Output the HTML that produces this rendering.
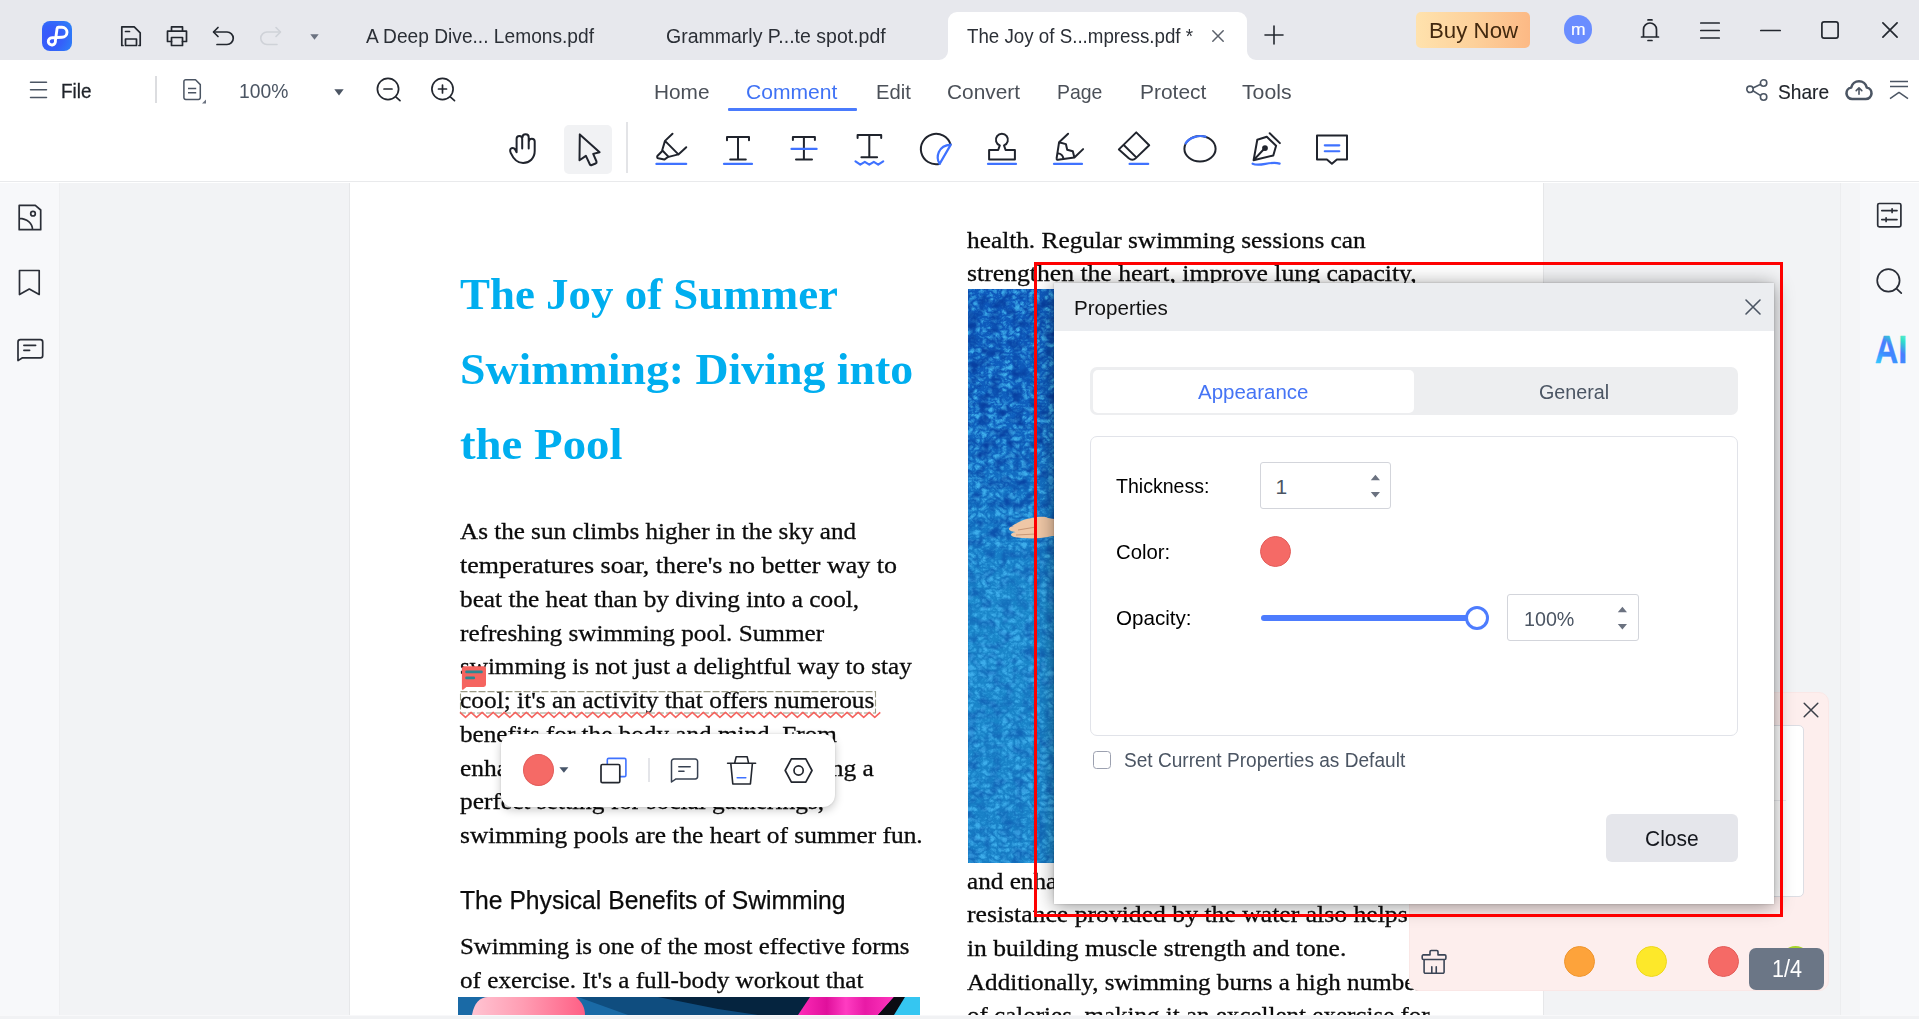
<!DOCTYPE html>
<html><head><meta charset="utf-8"><title>PDF Editor</title>
<style>
*{box-sizing:border-box;margin:0;padding:0}
html,body{width:1919px;height:1019px;overflow:hidden;background:#f2f3f5;font-family:"Liberation Sans","DejaVu Sans",sans-serif;color:#1f2329}
.a{position:absolute}
.t{position:absolute;white-space:nowrap;line-height:1;transform-origin:0 0}
svg{position:absolute;overflow:visible}
.ic{fill:none;stroke:#23272f;stroke-width:1.7;stroke-linecap:round;stroke-linejoin:round}
.bl{fill:none;stroke:#3f72ff;stroke-width:2;stroke-linecap:round}
#titlebar{left:0;top:0;width:1919px;height:60px;background:#e7e8ed}
#menubar{left:0;top:60px;width:1919px;height:121px;background:#fff}
#tbline{left:0;top:181px;width:1919px;height:1px;background:#e9eaec}
#tbgap{left:0;top:182px;width:1919px;height:1px;background:#fff}
#lside{left:0;top:183px;width:60px;height:836px;background:#f7f8fa;border-right:1px solid #eeeff1}
#rside{left:1860px;top:183px;width:59px;height:836px;background:#f7f8fa}
#rscroll{left:1840px;top:183px;width:20px;height:836px;background:#f4f5f7;border-left:1px solid #ecedef}
#page{left:349px;top:183px;width:1195px;height:836px;background:#fff;border-left:1px solid #e6e7e9;border-right:1px solid #e6e7e9}
#bottombar{left:0;top:1015px;width:1919px;height:4px;background:#f1f2f4;border-top:1px solid #f8f8fa}
.tk{fill:none;stroke:#20242d;stroke-width:2;stroke-linecap:round;stroke-linejoin:round}.tb{fill:none;stroke:#3f72ff;stroke-width:2.2;stroke-linecap:round;stroke-linejoin:round}
.sk{fill:none;stroke:#2a2e37;stroke-width:1.7;stroke-linecap:round;stroke-linejoin:round}
</style></head><body>
<div class="a" id="titlebar"></div>
<div class="a" id="menubar"></div>
<div class="a" id="tbline"></div>
<div class="a" id="tbgap"></div>
<div class="a" id="lside"></div>
<div class="a" id="page"></div>
<div class="a" id="rscroll"></div>
<div class="a" id="rside"></div>
<!-- logo -->
<div class="a" style="left:42px;top:21px;width:30px;height:30px;border-radius:8px;background:radial-gradient(circle at 30% 55%,#3b55fb 0%,#3560fa 45%,#2d7df8 85%,#3a93f8 100%)"></div>
<svg style="left:42px;top:21px" width="30" height="30" viewBox="0 0 30 30"><path d="M9.9 16.8 L20 16.3 A5 5 0 0 0 20 6.3 L16.4 6.3 Q15.3 6.3 15.1 7.4 L13.4 19.6 A3.6 3.6 0 1 1 9.9 16.8" fill="none" stroke="#fff" stroke-width="2.9" stroke-linecap="round" stroke-linejoin="round"/></svg>
<!-- save -->
<svg style="left:120px;top:25px" width="22" height="22" viewBox="0 0 22 22"><path class="ic" d="M3 20.5 H1.8 V1.8 H14.2 L20.2 7.8 V20.5 H19"/><path class="ic" d="M5.5 20.5 V14 H16.5 V20.5 Z"/><path class="ic" d="M5.5 6.5 H9.5"/></svg>
<!-- print -->
<svg style="left:166px;top:25px" width="22" height="22" viewBox="0 0 22 22"><path class="ic" d="M5.5 6 V1.8 H16.5 V6"/><path class="ic" d="M5.5 16.5 H1.5 V6.2 H20.5 V16.5 H16.5"/><path class="ic" d="M5.5 12.5 H16.5 V20.5 H5.5 Z"/></svg>
<!-- undo -->
<svg style="left:212px;top:26px" width="23" height="20" viewBox="0 0 23 20"><path class="ic" d="M6 1.5 L1.5 6 L6 10.5"/><path class="ic" d="M2 6 H15 a6 6 0 0 1 0 12.5 H5"/></svg>
<!-- redo (disabled) -->
<svg style="left:259px;top:26px" width="23" height="20" viewBox="0 0 23 20"><g stroke="#cfd2d8" fill="none" stroke-width="1.6" stroke-linecap="round" stroke-linejoin="round"><path d="M17 1.5 L21.5 6 L17 10.5"/><path d="M21 6 H8 a6 6 0 0 0 0 12.5 H18"/></g></svg>
<!-- dropdown -->
<svg style="left:310px;top:34px" width="9" height="6" viewBox="0 0 9 6"><path d="M0.3 0.3 H8.7 L4.5 5.7 Z" fill="#6b7280"/></svg>
<span class="t" style="left:366px;top:26.3px;font-size:20.5px;transform:scaleX(0.9350);color:#2b2f36">A Deep Dive... Lemons.pdf</span>
<span class="t" style="left:666px;top:26.3px;font-size:20.5px;transform:scaleX(0.9515);color:#2b2f36">Grammarly P...te spot.pdf</span>
<!-- active tab -->
<div class="a" style="left:948px;top:12px;width:299px;height:48px;background:#fff;border-radius:9px 9px 0 0"></div>
<svg style="left:939px;top:51px" width="9" height="9" viewBox="0 0 9 9"><path d="M9 0 V9 H0 A9 9 0 0 0 9 0 Z" fill="#fff"/></svg>
<svg style="left:1247px;top:51px" width="9" height="9" viewBox="0 0 9 9"><path d="M0 0 V9 H9 A9 9 0 0 1 0 0 Z" fill="#fff"/></svg>
<span class="t" style="left:966.7px;top:26.3px;font-size:20.5px;transform:scaleX(0.9141);color:#2b2f36">The Joy of S...mpress.pdf *</span>
<svg style="left:1211px;top:29px" width="14" height="14" viewBox="0 0 14 14"><path d="M1.8 1.8 L12.2 12.2 M12.2 1.8 L1.8 12.2" stroke="#5b616b" stroke-width="1.5" fill="none" stroke-linecap="round"/></svg>
<svg style="left:1264px;top:25px" width="20" height="20" viewBox="0 0 20 20"><path d="M10 1 V19 M1 10 H19" stroke="#23272f" stroke-width="1.6" fill="none" stroke-linecap="round"/></svg>
<!-- buy now -->
<div class="a" style="left:1416px;top:12px;width:114px;height:36px;border-radius:5px;background:linear-gradient(90deg,#ffe2ad 0%,#fdd19b 50%,#fcb985 100%)"></div>
<span class="t" style="left:1428.7px;top:19.6px;font-size:21.8px;transform:scaleX(1.0214);color:#43290f">Buy Now</span>
<!-- avatar -->
<div class="a" style="left:1563.6px;top:15.3px;width:28.6px;height:28.6px;border-radius:50%;background:#6a8dff"></div>
<span class="t" style="left:1570.8px;top:21.0px;font-size:17px;transform:scaleX(1.0302);color:#fff;-webkit-text-stroke:0.15px #fff">m</span>
<!-- bell -->
<svg style="left:1640px;top:19px" width="20" height="23" viewBox="0 0 20 23"><path class="ic" d="M1.5 18 H18.5 M3.5 18 V10.5 a6.5 6.5 0 0 1 13 0 V18 M8 0.9 H12 M8 21.5 H12"/></svg>
<!-- hamburger -->
<svg style="left:1700px;top:22px" width="20" height="17" viewBox="0 0 20 17"><path class="ic" d="M0.8 1 H19.2 M0.8 8.5 H19.2 M0.8 16 H19.2"/></svg>
<!-- min -->
<svg style="left:1760px;top:29px" width="21" height="3" viewBox="0 0 21 3"><path class="ic" d="M0.8 1.5 H20.2"/></svg>
<!-- max -->
<svg style="left:1821px;top:21px" width="18" height="18" viewBox="0 0 18 18"><rect class="ic" x="0.9" y="0.9" width="16.2" height="16.2" rx="2.2"/></svg>
<!-- close -->
<svg style="left:1882px;top:22px" width="16" height="16" viewBox="0 0 16 16"><path class="ic" d="M0.9 0.9 L15.1 15.1 M15.1 0.9 L0.9 15.1"/></svg>

<!-- file hamburger -->
<svg style="left:30px;top:81px" width="17" height="18" viewBox="0 0 17 18"><path d="M0.5 1.2 H16.5 M0.5 8.8 H16.5 M0.5 16.6 H16.5" stroke="#4b5563" stroke-width="1.5" fill="none" stroke-linecap="round"/></svg>
<span class="t" style="left:61px;top:81.0px;font-size:20.5px;transform:scaleX(0.9229);color:#1f2329;-webkit-text-stroke:0.3px #1f2329">File</span>
<div class="a" style="left:155px;top:76px;width:2px;height:27px;background:#dcdde0"></div>
<!-- page icon -->
<svg style="left:183px;top:79px" width="24" height="26" viewBox="0 0 24 26"><path d="M0.9 2.6 a1.8 1.8 0 0 1 1.8-1.8 H12.5 L17.3 5.6 V18.6 a1.8 1.8 0 0 1-1.8 1.8 H2.7 a1.8 1.8 0 0 1-1.8-1.8 Z" fill="none" stroke="#4b5563" stroke-width="1.5" stroke-linejoin="round"/><path d="M5 9.5 H13.2 M5 13.8 H13.2" stroke="#4b5563" stroke-width="1.5" fill="none"/><path d="M23 20.5 V24.5 H19 Z" fill="#6b7280"/></svg>
<span class="t" style="left:238.7px;top:80.0px;font-size:21px;transform:scaleX(0.9177);color:#4b5563">100%</span>
<svg style="left:334px;top:89px" width="10" height="7" viewBox="0 0 10 7"><path d="M0.3 0.3 H9.7 L5 6.5 Z" fill="#4b5563"/></svg>
<!-- zoom out -->
<svg style="left:376px;top:77px" width="26" height="26" viewBox="0 0 26 26"><g stroke="#23272f" stroke-width="1.7" fill="none" stroke-linecap="round"><circle cx="12" cy="12" r="10.6"/><path d="M19.8 19.8 L24 23.6 M8 12 H16"/></g></svg>
<!-- zoom in -->
<svg style="left:430px;top:77px" width="26" height="26" viewBox="0 0 26 26"><g stroke="#23272f" stroke-width="1.7" fill="none" stroke-linecap="round"><circle cx="12.5" cy="12" r="10.6"/><path d="M20.3 19.8 L24.5 23.6 M8.5 12 H16.5 M12.5 8 V16"/></g></svg>
<!-- menu tabs -->
<span class="t" style="left:653.5px;top:81.0px;font-size:21px;transform:scaleX(0.9905);color:#4b5058">Home</span>
<span class="t" style="left:746.3px;top:81.0px;font-size:21px;transform:scaleX(1.0041);color:#3f72f5">Comment</span>
<div class="a" style="left:728px;top:108px;width:129px;height:3px;background:#4a7bfd;border-radius:1px"></div>
<span class="t" style="left:875.6px;top:81.0px;font-size:21px;transform:scaleX(0.9617);color:#4b5058">Edit</span>
<span class="t" style="left:946.9px;top:81.0px;font-size:21px;transform:scaleX(0.9928);color:#4b5058">Convert</span>
<span class="t" style="left:1057px;top:81.0px;font-size:21px;transform:scaleX(0.9256);color:#4b5058">Page</span>
<span class="t" style="left:1139.6px;top:81.0px;font-size:21px;transform:scaleX(0.9965);color:#4b5058">Protect</span>
<span class="t" style="left:1242.4px;top:81.0px;font-size:21px;transform:scaleX(1.0116);color:#4b5058">Tools</span>
<!-- share -->
<svg style="left:1745px;top:78px" width="24" height="24" viewBox="0 0 24 24"><g stroke="#4b5563" stroke-width="1.6" fill="none"><circle cx="18.6" cy="5" r="3.2"/><circle cx="5" cy="11.3" r="3.2"/><circle cx="18.6" cy="19" r="3.2"/><path d="M7.9 9.9 L15.7 6.3 M7.9 12.8 L15.7 17.6"/></g></svg>
<span class="t" style="left:1778.3px;top:80.6px;font-size:21px;transform:scaleX(0.9117);color:#1f2329;-webkit-text-stroke:0.15px #1f2329">Share</span>
<!-- cloud -->
<svg style="left:1845px;top:79px" width="28" height="22" viewBox="0 0 28 22"><path d="M7.2 20 a5.8 5.8 0 0 1-1-11.5 a8 8 0 0 1 15.6 0 a5.8 5.8 0 0 1-1 11.5 Z" fill="none" stroke="#4b5563" stroke-width="2.6" stroke-linejoin="round"/><path d="M14 15.2 V9 M11.2 11.6 L14 8.8 L16.8 11.6" fill="none" stroke="#4b5563" stroke-width="1.6" stroke-linecap="round" stroke-linejoin="round"/></svg>
<!-- collapse -->
<svg style="left:1889px;top:80px" width="20" height="20" viewBox="0 0 20 20"><path d="M1 1.6 H19 M1 6.4 H19 M1 18.6 L10 12.4 L19 18.6" fill="none" stroke="#4b5563" stroke-width="1.5" stroke-linejoin="round"/></svg>

<div class="a" style="left:564px;top:125px;width:48px;height:49px;border-radius:5px;background:#f1f2f4"></div>
<div class="a" style="left:626px;top:122px;width:2px;height:51px;background:#e3e4e7"></div>
<!-- hand -->
<svg style="left:500px;top:125px" width="60" height="50" viewBox="0 0 60 50"><path class="tk" d="M16.6 27.3 V13.8 a2.8 2.8 0 0 1 5.6 0 V23.6 M22.5 12.3 a3.1 3.1 0 0 1 6.2 0 V23.6 M28.9 16.6 a2.9 2.9 0 0 1 5.8 0 V26 c0 7.2-5.2 12-11.6 12 c-5.8 0-9.4-3.6-12.4-10.2 c-1-2.2-0.7-3.9 0.9-4.6 c1.5-0.6 2.8 0.2 3.6 1.4 L16.6 27.3"/></svg>
<!-- cursor -->
<svg style="left:564px;top:125px" width="48" height="49" viewBox="0 0 48 49"><path class="tk" d="M15.8 9.4 L15.5 35.3 L21.9 30.9 L25.8 39.2 a1.6 1.6 0 0 0 2 0.8 l3.8-1.5 a1.6 1.6 0 0 0 0.9-2 L29.2 28.9 L35.6 27.3 Z"/></svg>
<!-- highlighter -->
<svg style="left:645px;top:125px" width="60" height="50" viewBox="0 0 60 50"><path class="tk" d="M27.5 8.75 L20 15.9 L33.4 29.4 L41.25 22.2 M20 15.9 L17.2 25.2 L23.6 31.9 L33.4 29.4 M17 26.3 L12.6 30.8 a1.5 1.5 0 0 0 0.6 2.5 L19.3 34.6 L23 32"/><path class="tb" d="M11.4 38.9 H41.2"/></svg>
<!-- underline T -->
<svg style="left:645px;top:125px" width="120" height="50" viewBox="0 0 120 50"><path class="tk" d="M82 15.2 V11.9 H104 V15.2 M93 11.9 V34.4 M85.2 34.4 H100.8"/><path class="tb" d="M79 38.9 H107"/></svg>
<!-- strike T -->
<svg style="left:780px;top:125px" width="60" height="50" viewBox="0 0 60 50"><path class="tk" d="M12.9 15 V11.9 H34.9 V15 M23.9 11.9 V34.4 M16 34.4 H32"/><path class="tb" d="M11.5 23.9 H36.6"/></svg>
<!-- squiggle T -->
<svg style="left:780px;top:125px" width="120" height="50" viewBox="0 0 120 50"><path class="tk" d="M77.6 13 V9.9 H101.2 V13 M89.3 9.9 V32.2 M81.4 32.2 H97.1"/><path class="tb" d="M75.5 36.4 L80.3 39.6 L84.8 36.9 L89.3 39.6 L93.8 36.9 L98.2 39.6 L103.2 36.4" stroke-width="2"/></svg>
<!-- sticker -->
<svg style="left:910px;top:125px" width="60" height="50" viewBox="0 0 60 50"><path class="tk" d="M40.6 19.6 A15.2 15.2 0 1 0 29.4 38.9"/><path class="tb" d="M40.8 19.6 L29.6 38.9 C25.5 32 28 20.5 40.8 19.6 Z" stroke-linejoin="miter"/></svg>
<!-- stamp -->
<svg style="left:910px;top:125px" width="120" height="50" viewBox="0 0 120 50"><path class="tk" d="M88.2 25 H79.1 V34.6 H104.9 V25 H95.6 L94 20.4 A6 6 0 1 0 89.8 20.4 Z"/><path class="tb" d="M78 38.9 H106"/></svg>
<!-- pencil -->
<svg style="left:1040px;top:125px" width="60" height="50" viewBox="0 0 60 50"><path class="tk" d="M28.1 8.75 L19.1 17.2 L25.9 19.1 L27.2 24.7 L32.8 26.25 L34.4 32.5 L43.1 24.1 M19.1 17.2 L16.6 33.4 a1.2 1.2 0 0 0 1.4 1.4 L34.4 32.5 M18.4 28.4 C21 29 23 31 23.4 33.6"/><path class="tb" d="M14 38.9 H42"/></svg>
<!-- eraser -->
<svg style="left:1040px;top:125px" width="120" height="50" viewBox="0 0 120 50"><path class="tk" d="M96.25 7.4 L109.2 20.3 L95.6 33.4 a4.6 4.6 0 0 1-6.6 0 L78.9 24.4 Z M83.75 20 L95.8 31.9"/><path class="tb" d="M89.6 38.9 H108.2"/></svg>
<!-- ellipse -->
<svg style="left:1170px;top:125px" width="60" height="50" viewBox="0 0 60 50"><ellipse class="tk" cx="30" cy="23.75" rx="15.6" ry="12.8"/><path class="tb" d="M15.6 18.4 C18.5 13.5 27.5 9.5 35.5 11.6" stroke-linecap="butt" stroke-width="2"/></svg>
<!-- pen -->
<svg style="left:1170px;top:125px" width="120" height="50" viewBox="0 0 120 50"><path class="tk" d="M83.6 35.2 L87.3 14.8 L96.8 11.8 L106.1 20.7 L103.3 30.5 Z M99.7 8.2 L109.9 18.1 M83.9 34.9 L94 24"/><circle cx="95" cy="23.1" r="2.9" fill="#20242d"/><path class="tb" d="M82.6 38.7 C90 42.5 100 35.5 109.6 38.6"/></svg>
<!-- note -->
<svg style="left:1300px;top:125px" width="60" height="50" viewBox="0 0 60 50"><path class="tk" d="M17 10.4 H47 V34.4 H36.9 L31.9 38.7 L26.9 34.4 H17 Z"/><path class="tb" d="M24.8 20.3 H39.3 M24.8 26.25 H39.3"/></svg>

<!-- left: thumbnails -->
<svg style="left:0;top:190px" width="60" height="190" viewBox="0 0 60 190"><path class="sk" d="M19.2 15.4 H35.3 L40.7 20 V39.7 H19.2 Z M19.2 28.3 C27 28.6 32.3 33 32.6 39.7"/><circle class="sk" cx="33" cy="23.7" r="2.3"/>
<path class="sk" d="M19.5 80.5 H39.2 V104.5 L29.3 99 L19.5 104.5 Z"/>
<path class="sk" d="M20.5 149.6 H40.3 a2.4 2.4 0 0 1 2.4 2.4 V165.4 a2.4 2.4 0 0 1-2.4 2.4 H22.5 L18 170.6 V152 a2.4 2.4 0 0 1 2.4-2.4 Z M23.9 155.3 H35.6 M23.9 160.3 H29.6"/></svg>
<!-- right -->
<svg style="left:1860px;top:190px" width="59" height="190" viewBox="0 0 59 190"><rect class="sk" x="17.7" y="13.5" width="23.2" height="23.4" rx="1.6"/><path class="sk" d="M21.8 20.6 H37 M21.8 29.6 H37 M32.1 18.8 V22.4 M26.1 27.8 V31.4" stroke-width="1.4"/>
<circle class="sk" cx="28.4" cy="90.4" r="11.2"/><path class="sk" d="M36.5 98.6 L41.3 103.2"/>
<defs><linearGradient id="aig" gradientUnits="userSpaceOnUse" x1="16" y1="174" x2="36" y2="142"><stop offset="0" stop-color="#35d2ff"/><stop offset="0.35" stop-color="#3d8cff"/><stop offset="0.6" stop-color="#4a7dff"/><stop offset="0.9" stop-color="#2fe0c8"/><stop offset="1" stop-color="#50e8cb"/></linearGradient></defs>
<text x="14.8" y="172.9" font-family="Liberation Sans, DejaVu Sans, sans-serif" font-weight="bold" font-size="39" textLength="32.6" lengthAdjust="spacingAndGlyphs" fill="url(#aig)" stroke="url(#aig)" stroke-width="0.3" stroke-linejoin="round">AI</text></svg>

<!-- title -->
<span class="t" style="left:460px;top:272.8px;font-size:44px;font-family:'Liberation Serif','DejaVu Serif',serif;transform:scaleX(1.0208);color:#00aeef;font-weight:bold">The Joy of Summer</span>
<span class="t" style="left:460px;top:347.8px;font-size:44px;font-family:'Liberation Serif','DejaVu Serif',serif;transform:scaleX(1.0415);color:#00aeef;font-weight:bold">Swimming: Diving into</span>
<span class="t" style="left:460px;top:422.8px;font-size:44px;font-family:'Liberation Serif','DejaVu Serif',serif;transform:scaleX(1.0637);color:#00aeef;font-weight:bold">the Pool</span>
<!-- left column paragraph -->
<span class="t" style="left:459.5px;top:519.4px;font-size:24px;font-family:'Liberation Serif','DejaVu Serif',serif;transform:scaleX(1.0459);color:#0b0b0b;-webkit-text-stroke:0.3px #0b0b0b">As the sun climbs higher in the sky and</span>
<span class="t" style="left:459.5px;top:553.2px;font-size:24px;font-family:'Liberation Serif','DejaVu Serif',serif;transform:scaleX(1.0818);color:#0b0b0b;-webkit-text-stroke:0.3px #0b0b0b">temperatures soar, there's no better way to</span>
<span class="t" style="left:459.5px;top:586.9px;font-size:24px;font-family:'Liberation Serif','DejaVu Serif',serif;transform:scaleX(1.0524);color:#0b0b0b;-webkit-text-stroke:0.3px #0b0b0b">beat the heat than by diving into a cool,</span>
<span class="t" style="left:459.5px;top:620.7px;font-size:24px;font-family:'Liberation Serif','DejaVu Serif',serif;transform:scaleX(1.0504);color:#0b0b0b;-webkit-text-stroke:0.3px #0b0b0b">refreshing swimming pool. Summer</span>
<span class="t" style="left:459.5px;top:654.4px;font-size:24px;font-family:'Liberation Serif','DejaVu Serif',serif;transform:scaleX(1.0456);color:#0b0b0b;-webkit-text-stroke:0.3px #0b0b0b">swimming is not just a delightful way to stay</span>
<span class="t" style="left:460px;top:688.2px;font-size:24px;font-family:'Liberation Serif','DejaVu Serif',serif;transform:scaleX(1.0577);color:#0b0b0b;-webkit-text-stroke:0.3px #0b0b0b">cool; it's an activity that offers numerous</span>
<span class="t" style="left:459.5px;top:721.9px;font-size:24px;font-family:'Liberation Serif','DejaVu Serif',serif;transform:scaleX(1.0488);color:#0b0b0b;-webkit-text-stroke:0.3px #0b0b0b">benefits for the body and mind. From</span>
<span class="t" style="left:459.5px;top:755.7px;font-size:24px;font-family:'Liberation Serif','DejaVu Serif',serif;transform:scaleX(1.0615);color:#0b0b0b;-webkit-text-stroke:0.3px #0b0b0b">enhancing physical health to providing a</span>
<span class="t" style="left:459.5px;top:789.4px;font-size:24px;font-family:'Liberation Serif','DejaVu Serif',serif;transform:scaleX(1.0568);color:#0b0b0b;-webkit-text-stroke:0.3px #0b0b0b">perfect setting for social gatherings,</span>
<span class="t" style="left:459.5px;top:823.2px;font-size:24px;font-family:'Liberation Serif','DejaVu Serif',serif;transform:scaleX(1.0582);color:#0b0b0b;-webkit-text-stroke:0.3px #0b0b0b">swimming pools are the heart of summer fun.</span>
<span class="t" style="left:459.5px;top:887.0px;font-size:26.5px;transform:scaleX(0.9315);color:#0b0b0b;-webkit-text-stroke:0.25px #0b0b0b">The Physical Benefits of Swimming</span>
<span class="t" style="left:459.5px;top:934.3px;font-size:24px;font-family:'Liberation Serif','DejaVu Serif',serif;transform:scaleX(1.0369);color:#0b0b0b;-webkit-text-stroke:0.3px #0b0b0b">Swimming is one of the most effective forms</span>
<span class="t" style="left:459.5px;top:968.4px;font-size:24px;font-family:'Liberation Serif','DejaVu Serif',serif;transform:scaleX(1.0483);color:#0b0b0b;-webkit-text-stroke:0.3px #0b0b0b">of exercise. It's a full-body workout that</span>
<!-- bottom-left image strip -->
<svg style="left:458px;top:997px" width="462" height="18" viewBox="0 0 462 18">
<defs><linearGradient id="fl" x1="0" y1="0" x2="1" y2="0"><stop offset="0" stop-color="#ffc4d2"/><stop offset="0.45" stop-color="#ff9db3"/><stop offset="1" stop-color="#ff5f85"/></linearGradient>
<linearGradient id="mg" x1="0" y1="0" x2="1" y2="0"><stop offset="0" stop-color="#ff2bb8"/><stop offset="0.3" stop-color="#e0109c"/><stop offset="0.5" stop-color="#ff3cc2"/><stop offset="0.7" stop-color="#e81aa6"/><stop offset="1" stop-color="#ff35bd"/></linearGradient></defs>
<rect width="462" height="18" fill="#05243f"/>
<path d="M0 0 H180 L215 18 H0 Z" fill="#1a6aa6"/>
<path d="M120 0 H200 L260 12 L300 18 H170 Z" fill="#0f4d7f"/>
<path d="M14 18 C16 6 22 0 30 0 H118 C124 5 127 11 127 18 Z" fill="url(#fl)"/>
<path d="M352 0 H436 L420 18 H340 Z" fill="url(#mg)"/>
<path d="M436 0 H447 L436 18 H420 Z" fill="#0b0b12"/>
<path d="M447 0 H462 V18 H436 Z" fill="#35c6f1"/>
</svg>
<!-- right column -->
<span class="t" style="left:967.3px;top:227.9px;font-size:24px;font-family:'Liberation Serif','DejaVu Serif',serif;transform:scaleX(1.0549);color:#0b0b0b;-webkit-text-stroke:0.3px #0b0b0b">health. Regular swimming sessions can</span>
<span class="t" style="left:967.3px;top:261.2px;font-size:24px;font-family:'Liberation Serif','DejaVu Serif',serif;transform:scaleX(1.0700);color:#0b0b0b;-webkit-text-stroke:0.3px #0b0b0b">strengthen the heart, improve lung capacity,</span>
<svg style="left:968px;top:289px" width="90" height="574" viewBox="0 0 90 574">
<defs>
<linearGradient id="pw" x1="0" y1="0" x2="0" y2="1"><stop offset="0" stop-color="#0e58bb"/><stop offset="0.22" stop-color="#0f5fbd"/><stop offset="0.4" stop-color="#1475c4"/><stop offset="0.55" stop-color="#1a86c9"/><stop offset="0.8" stop-color="#1983c8"/><stop offset="1" stop-color="#187fc6"/></linearGradient>
<linearGradient id="dkm" x1="0" y1="0" x2="0" y2="1"><stop offset="0" stop-color="#fff"/><stop offset="0.3" stop-color="#fff"/><stop offset="0.5" stop-color="#777"/><stop offset="1" stop-color="#666"/></linearGradient>
<mask id="dkmask"><rect width="90" height="574" fill="url(#dkm)"/></mask>
<filter id="whl" x="0" y="0" width="100%" height="100%" color-interpolation-filters="sRGB"><feTurbulence type="turbulence" baseFrequency="0.15 0.17" numOctaves="3" seed="7"/><feColorMatrix type="matrix" values="0 0 0 0 0.24  0 0 0 0 0.68  0 0 0 0 0.92  2.3 0 0 0 -0.40"/></filter>
<filter id="wdk" x="0" y="0" width="100%" height="100%" color-interpolation-filters="sRGB"><feTurbulence type="fractalNoise" baseFrequency="0.09 0.10" numOctaves="2" seed="3"/><feColorMatrix type="matrix" values="0 0 0 0 0.03  0 0 0 0 0.25  0 0 0 0 0.63  0 2.6 0 0 -1.12"/></filter>
</defs>
<rect width="90" height="574" fill="url(#pw)"/>
<rect width="90" height="574" filter="url(#whl)"/>
<g mask="url(#dkmask)"><rect width="90" height="574" filter="url(#wdk)"/></g>
<path d="M44 237 c4-3 12-7 20-8 c6-1 12-2 16 0 l6 1 h6 v17 h-8 c-8 2-18 3-28 2 c-6 0-12-1-13-3 c0-2 3-3 6-3 c-4 0-8-1-8-3 c0-2 3-3 6-3 z" fill="#efc7a6"/>
<path d="M50 241 l18-3 M48 246 l20-1" stroke="#c99775" stroke-width="1" fill="none"/>
</svg>
<span class="t" style="left:967.3px;top:868.7px;font-size:24px;font-family:'Liberation Serif','DejaVu Serif',serif;transform:scaleX(1.0498);color:#0b0b0b;-webkit-text-stroke:0.3px #0b0b0b">and enhance</span>
<span class="t" style="left:967.3px;top:901.8px;font-size:24px;font-family:'Liberation Serif','DejaVu Serif',serif;transform:scaleX(1.0700);color:#0b0b0b;-webkit-text-stroke:0.3px #0b0b0b">resistance provided by the water also helps</span>
<span class="t" style="left:967.3px;top:936.0px;font-size:24px;font-family:'Liberation Serif','DejaVu Serif',serif;transform:scaleX(1.0656);color:#0b0b0b;-webkit-text-stroke:0.3px #0b0b0b">in building muscle strength and tone.</span>
<span class="t" style="left:967.3px;top:969.7px;font-size:24px;font-family:'Liberation Serif','DejaVu Serif',serif;transform:scaleX(1.0449);color:#0b0b0b;-webkit-text-stroke:0.3px #0b0b0b">Additionally, swimming burns a high number</span>
<span class="t" style="left:967.3px;top:1003.4px;font-size:24px;font-family:'Liberation Serif','DejaVu Serif',serif;transform:scaleX(1.0426);color:#0b0b0b;-webkit-text-stroke:0.3px #0b0b0b">of calories, making it an excellent exercise for</span>
<!-- annotation -->
<svg style="left:455px;top:660px" width="430" height="64" viewBox="0 0 430 64">
<path d="M6.9 8.6 a2.4 2.4 0 0 1 2.4-2.4 H28.6 a2.4 2.4 0 0 1 2.4 2.4 V24.5 a2.4 2.4 0 0 1-2.4 2.4 H11.4 L8.4 29.6 a0.9 0.9 0 0 1-1.5-0.7 Z" fill="#f5645f"/>
<path d="M11.5 11.9 H26.5 M11.5 17.9 H18.8" stroke="#2b8792" stroke-width="2.6" stroke-linecap="round" fill="none"/>
<rect x="5.5" y="31.6" width="415" height="21.4" fill="none" stroke="#9a9a86" stroke-width="1.1" stroke-dasharray="7 2"/>
<path d="M5 52.4 l5.53 5 l5.53-5 l5.53 5 l5.53-5 l5.53 5 l5.53-5 l5.53 5 l5.53-5 l5.53 5 l5.53-5 l5.53 5 l5.53-5 l5.53 5 l5.53-5 l5.53 5 l5.53-5 l5.53 5 l5.53-5 l5.53 5 l5.53-5 l5.53 5 l5.53-5 l5.53 5 l5.53-5 l5.53 5 l5.53-5 l5.53 5 l5.53-5 l5.53 5 l5.53-5 l5.53 5 l5.53-5 l5.53 5 l5.53-5 l5.53 5 l5.53-5 l5.53 5 l5.53-5 l5.53 5 l5.53-5 l5.53 5 l5.53-5 l5.53 5 l5.53-5 l5.53 5 l5.53-5 l5.53 5 l5.53-5 l5.53 5 l5.53-5 l5.53 5 l5.53-5 l5.53 5 l5.53-5 l5.53 5 l5.53-5 l5.53 5 l5.53-5 l5.53 5 l5.53-5 l5.53 5 l5.53-5 l5.53 5 l5.53-5 l5.53 5 l5.53-5 l5.53 5 l5.53-5 l5.53 5 l5.53-5 l5.53 5 l5.53-5 l5.53 5 l5.53-5 l5.53 5 l5.53-5" fill="none" stroke="#f5645f" stroke-width="1.5" stroke-linejoin="round"/>
</svg>

<div class="a" style="left:1409px;top:692px;width:420px;height:299px;border-radius:10px;background:#fdeeed;border:1px solid #fae7e6"></div>
<div class="a" style="left:1430px;top:725px;width:374px;height:172px;border-radius:5px;background:#fff;border:1px solid #dcdde3"></div>
<div class="a" style="left:1431px;top:800px;width:355px;height:1px;background:#ebecef"></div>
<svg style="left:1803px;top:702px" width="16" height="16" viewBox="0 0 16 16"><path d="M1.2 1.2 L14.8 14.8 M14.8 1.2 L1.2 14.8" stroke="#3a3f48" stroke-width="1.5" fill="none" stroke-linecap="round"/></svg>
<!-- trash -->
<svg style="left:1421px;top:949px" width="26" height="26" viewBox="0 0 26 26"><g fill="none" stroke="#3b4556" stroke-width="1.6" stroke-linejoin="round" stroke-linecap="round"><path d="M9 5.9 V2.7 a1.2 1.2 0 0 1 1.2-1.2 h5.6 a1.2 1.2 0 0 1 1.2 1.2 V5.9 H23.7 a1.2 1.2 0 0 1 1.2 1.2 V9.3 a1.2 1.2 0 0 1-1.2 1.2 H2.4 a1.2 1.2 0 0 1-1.2-1.2 V7.1 a1.2 1.2 0 0 1 1.2-1.2 Z M3.1 10.6 V22.9 a1.4 1.4 0 0 0 1.4 1.4 H21.7 a1.4 1.4 0 0 0 1.4-1.4 V10.6 M10.8 17.7 V24 M15.25 17.7 V24"/></g></svg>
<div class="a" style="left:1564px;top:946px;width:31px;height:31px;border-radius:50%;background:#fda33b;border:1px solid #ef9630"></div>
<div class="a" style="left:1636px;top:946px;width:31px;height:31px;border-radius:50%;background:#fde82a;border:1px solid #eed820"></div>
<div class="a" style="left:1708px;top:946px;width:31px;height:31px;border-radius:50%;background:#f56a66;border:1px solid #e35d5a"></div>
<div class="a" style="left:1780px;top:946px;width:31px;height:31px;border-radius:50%;background:#a6d52a"></div>
<div class="a" style="left:1749px;top:948px;width:75px;height:42px;border-radius:7px;background:#6b7686"></div>
<span class="t" style="left:1772px;top:958.3px;font-size:23px;transform:scaleX(0.9380);color:#fff">1/4</span>

<div class="a" style="left:501px;top:734px;width:334px;height:73px;border-radius:12px;background:#fff;box-shadow:0 3px 10px rgba(0,0,0,0.22),0 0 2px rgba(0,0,0,0.12)"></div>
<div class="a" style="left:523px;top:754px;width:31px;height:32px;border-radius:50%;background:#f56a66;border:1px solid #e35d5a"></div>
<svg style="left:559px;top:767px" width="10" height="6" viewBox="0 0 10 6"><path d="M0.4 0.2 H9.4 L4.9 5.8 Z" fill="#475569"/></svg>
<svg style="left:595px;top:750px" width="40" height="40" viewBox="0 0 40 40"><rect x="12.3" y="8.4" width="18.6" height="18.2" rx="1.4" fill="none" stroke="#3f72ff" stroke-width="1.6"/><rect x="6" y="14.5" width="18.8" height="18.2" rx="1.4" fill="#fff" stroke="#23272f" stroke-width="1.7"/></svg>
<div class="a" style="left:648px;top:758px;width:2px;height:24px;background:#e4e5e9"></div>
<svg style="left:660px;top:725px" width="180" height="90" viewBox="0 0 180 90"><g fill="none" stroke="#374151" stroke-width="1.5" stroke-linecap="round" stroke-linejoin="round">
<path d="M14 34 H35.2 a2.4 2.4 0 0 1 2.4 2.4 V51.5 a2.4 2.4 0 0 1-2.4 2.4 H16 L11.5 57 V36.4 a2.4 2.4 0 0 1 2.4-2.4 Z M18.8 41.7 H30.2 M18.8 46.2 H24"/>
<path d="M67.6 38.2 H95.6 M74.6 38.2 L76.2 31.8 H87.2 L88.6 38.2 M70.8 38.4 L72.8 59 H90.4 L92.4 38.4" stroke="#23272f" stroke-width="1.6"/>
<path d="M125.2 45.5 L131.4 33.9 H145.8 L152 45.5 L145.8 57.1 H131.4 Z" stroke="#23272f" stroke-width="1.7"/><circle cx="138.6" cy="45.5" r="4.6" stroke="#23272f" stroke-width="1.7"/>
<path d="M77.2 52.8 H85.8" stroke="#3f72ff" stroke-width="1.6"/></g></svg>

<div class="a" style="left:1054px;top:283px;width:720px;height:621px;background:#fff;box-shadow:0 2px 18px rgba(0,0,0,0.42),0 0 2px rgba(0,0,0,0.2)"></div>
<div class="a" style="left:1034px;top:262px;width:749px;height:655px;border:3px solid #fe0000"></div>
<div class="a" style="left:1054px;top:283px;width:720px;height:47.5px;background:#ebedf0"></div>
<span class="t" style="left:1074.2px;top:296.8px;font-size:21px;transform:scaleX(0.9800);color:#111">Properties</span>
<svg style="left:1745px;top:299px" width="16" height="16" viewBox="0 0 16 16"><path d="M1 1 L15 15 M15 1 L1 15" stroke="#4b5563" stroke-width="1.6" fill="none" stroke-linecap="round"/></svg>
<!-- tabs -->
<div class="a" style="left:1090px;top:367px;width:648px;height:48px;border-radius:7px;background:#edeef0"></div>
<div class="a" style="left:1092.5px;top:369.5px;width:321.5px;height:43px;border-radius:5px;background:#fff"></div>
<span class="t" style="left:1198.3px;top:381.8px;font-size:20.5px;transform:scaleX(0.9990);color:#4574f5">Appearance</span>
<span class="t" style="left:1539.2px;top:381.8px;font-size:20.5px;transform:scaleX(0.9625);color:#4b5563">General</span>
<!-- panel -->
<div class="a" style="left:1090px;top:436px;width:648px;height:300px;border-radius:7px;border:1px solid #e1e3e9;background:#fff"></div>
<span class="t" style="left:1115.8px;top:475.4px;font-size:21px;transform:scaleX(0.9315);color:#000">Thickness:</span>
<div class="a" style="left:1260px;top:462px;width:131px;height:47px;border-radius:3px;border:1px solid #d3d5db;background:#fff"></div>
<span class="t" style="left:1275.4px;top:476.2px;font-size:21px;color:#4b5563">1</span>
<svg style="left:1370px;top:474px" width="11" height="24" viewBox="0 0 11 24"><path d="M0.8 6.2 L5.4 0.8 L10 6.2 Z M0.8 18 L5.4 23.4 L10 18 Z" fill="#6b7280"/></svg>
<span class="t" style="left:1115.8px;top:541.2px;font-size:21px;transform:scaleX(0.9673);color:#000">Color:</span>
<div class="a" style="left:1260px;top:536px;width:31px;height:31px;border-radius:50%;background:#f56a66;border:1px solid #e35d5a"></div>
<span class="t" style="left:1115.8px;top:607.0px;font-size:21px;transform:scaleX(0.9814);color:#000">Opacity:</span>
<div class="a" style="left:1261px;top:614.5px;width:216px;height:6px;border-radius:3px;background:#4d7cfe"></div>
<div class="a" style="left:1465px;top:606px;width:24px;height:24px;border-radius:50%;border:3px solid #4d7cfe;background:#fff"></div>
<div class="a" style="left:1507px;top:594px;width:132px;height:47px;border-radius:3px;border:1px solid #d3d5db;background:#fff"></div>
<span class="t" style="left:1524.4px;top:607.6px;font-size:21px;transform:scaleX(0.9382);color:#4b5563">100%</span>
<svg style="left:1617px;top:606px" width="11" height="24" viewBox="0 0 11 24"><path d="M0.8 6.2 L5.4 0.8 L10 6.2 Z M0.8 18 L5.4 23.4 L10 18 Z" fill="#6b7280"/></svg>
<!-- checkbox -->
<div class="a" style="left:1093px;top:751px;width:18px;height:18px;border-radius:3.5px;border:1.5px solid #9ca1b0;background:#fff"></div>
<span class="t" style="left:1123.6px;top:750.7px;font-size:19.5px;transform:scaleX(0.9790);color:#4b5563">Set Current Properties as Default</span>
<!-- close button -->
<div class="a" style="left:1606px;top:814px;width:132px;height:48px;border-radius:6px;background:#e5e6eb"></div>
<span class="t" style="left:1645px;top:828.7px;font-size:21.5px;transform:scaleX(0.9769);color:#15181e">Close</span>

<div class="a" id="bottombar"></div>
</body></html>
